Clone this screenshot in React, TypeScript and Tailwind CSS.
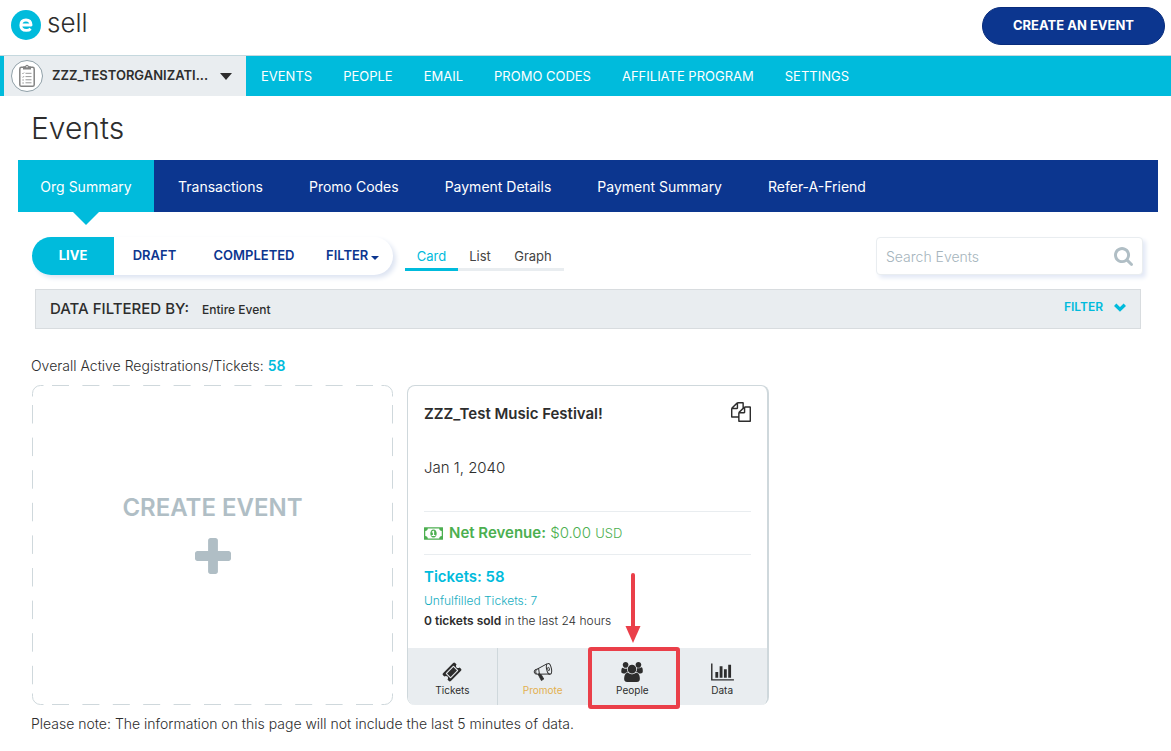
const PLUS = 'M1600 736v192q0 40-28 68t-68 28h-416v416q0 40-28 68t-68 28h-192q-40 0-68-28t-28-68v-416h-416q-40 0-68-28t-28-68v-192q0-40 28-68t68-28h416v-416q0-40 28-68t68-28h192q40 0 68 28t28 68v416h416q40 0 68 28t28 68z';
const SEARCH = 'M1216 832q0-185-131.5-316.5t-316.5-131.5-316.5 131.5-131.5 316.5 131.5 316.5 316.5 131.5 316.5-131.5 131.5-316.5zm512 832q0 52-38 90t-90 38q-54 0-90-38l-343-342q-179 124-399 124-143 0-273.5-55.5t-225-150-150-225-55.5-273.5 55.5-273.5 150-225 225-150 273.5-55.5 273.5 55.5 225 150 150 225 55.5 273.5q0 220-124 399l343 343q37 37 37 90z';
const COPY = 'M1696 384q40 0 68 28t28 68v1216q0 40-28 68t-68 28h-960q-40 0-68-28t-28-68v-288h-544q-40 0-68-28t-28-68v-672q0-40 20-88t48-76l408-408q28-28 76-48t88-20h416q40 0 68 28t28 68v328q68-40 128-40h416zm-544 213l-299 299h299v-299zm-640-384l-299 299h299v-299zm196 647l316-316v-416h-384v416q0 40-28 68t-68 28h-416v640h512v-256q0-40 20-88t48-76zm956 804v-1152h-384v416q0 40-28 68t-68 28h-416v640h896z';
const CHART = 'M640 896v512h-256v-512h256zm384-512v1024h-256v-1024h256zm1024 1152v128h-2048v-1536h128v1408h1920zm-640-896v768h-256v-768h256zm384-384v1152h-256v-1152h256z';
const USERS = 'M657 896q-162 5-265 128h-134q-82 0-138-40.5t-56-118.5q0-353 124-353 6 0 43.5 21t97.5 42.5 119 21.5q67 0 133-23-5 37-5 66 0 159 90 287zm1071 637q0 120-73 189.5t-194 69.5h-874q-121 0-194-69.5t-73-189.5q0-53 3.5-103.5t14-109 26.5-108.5 43-97.5 62-81 85.5-53.5 111.5-20q10 0 43 21.5t73 48 107 48 135 21.5 135-21.5 107-48 73-48 43-21.5q61 0 111.5 20t85.5 53.5 62 81 43 97.5 26.5 108.5 14 109 3.5 103.5zm-1024-1277q0 106-75 181t-181 75-181-75-75-181 75-181 181-75 181 75 75 181zm704 384q0 159-112.5 271.5t-271.5 112.5-271.5-112.5-112.5-271.5 112.5-271.5 271.5-112.5 271.5 112.5 112.5 271.5zm576 225q0 78-56 118.5t-138 40.5h-134q-103-123-265-128 90-128 90-287 0-29-5-66 66 23 133 23 59 0 119-21.5t97.5-42.5 43.5-21q124 0 124 353zm-128-609q0 106-75 181t-181 75-181-75-75-181 75-181 181-75 181 75 75 181z';
const MONEY = 'M768 1152h384v-96h-128v-448h-114l-148 137 77 80q42-37 55-57h2v288h-128v96zm512-256q0 70-21 142t-59.5 134-101.5 101-138 39-138-39-101.5-101-59.5-134-21-142 21-142 59.5-134 101.5-101 138-39 138 39 101.5 101 59.5 134 21 142zm512 256v-512q-106 0-181-75t-75-181h-1152q0 106-75 181t-181 75v512q106 0 181 75t75 181h1152q0-106 75-181t181-75zm128-832v1152q0 26-19 45t-45 19h-1792q-26 0-45-19t-19-45v-1152q0-26 19-45t45-19h1792q26 0 45 19t19 45z';
const TICKET = 'M1024 452l316 316-572 572-316-316zm-211 979l618-618q19-19 19-45t-19-45l-362-362q-18-18-45-18t-45 18l-618 618q-19 19-19 45t19 45l362 362q18 18 45 18t45-18zm889-637l-907 908q-37 37-90.5 37t-90.5-37l-126-126q56-56 56-136t-56-136-136-56-136 56l-125-126q-37-37-37-90.5t37-90.5l907-906q37-37 90.5-37t90.5 37l125 125q-56 56-56 136t56 136 136 56 136-56l126 125q37 37 37 90.5t-37 90.5z';

function Glyph({ d, box = '0 0 1792 1792', className }: { d: string; box?: string; className: string }) {
  return (
    <svg viewBox={box} className={className} fill="currentColor" aria-hidden="true">
      <path d={d} />
    </svg>
  );
}

function Clipboard() {
  return (
    <svg viewBox="0 0 32 32" className="size-8 shrink-0" fill="none" aria-hidden="true">
      <circle cx="16" cy="16" r="15.5" fill="#fff" stroke="#90a0a8" />
      <rect x="8.8" y="7.3" width="14.4" height="19" rx="1.6" stroke="#848484" strokeWidth="1.5" />
      <path d="M12 9.6V7.2q0-.9.9-.9h1.3q.2-1.6 1.8-1.6t1.8 1.6h1.3q.9 0 .9.9v2.4z" fill="#848484" />
      <circle cx="16" cy="6.8" r=".8" fill="#fff" />
      <path d="M11.3 13.2l.6.6 1.2-1.3M11.3 16.8l.6.6 1.2-1.3M11.3 20h1.6M11.3 23h1.6M14.5 13.3h6M14.5 16.6h6M14.5 19.8h6M14.5 22.8h6" stroke="#999" strokeWidth="1" />
    </svg>
  );
}

function Megaphone() {
  return (
    <svg viewBox="0 0 20 20" className="size-5" fill="none" stroke="#303030" aria-hidden="true">
      <path d="M4.4 7L14.2 1.7M5 12.2L17 12" strokeWidth="1" />
      <ellipse cx="16" cy="6.9" rx="2.4" ry="5.4" transform="rotate(-12 16 6.9)" strokeWidth="1" />
      <ellipse cx="15.6" cy="7" rx=".9" ry="1.8" transform="rotate(-12 15.6 7)" strokeWidth=".8" />
      <path d="M4.4 7Q1 7.4 1.1 10q.3 2.6 3.9 2.2l1.4-.1L5.6 6.4z" strokeWidth="1" />
      <path d="M3.2 7.6q-1 2.2 0 4.5" strokeWidth="1" />
      <path d="M5.2 12.4l2.8-.1 2.8 4.7-2.4 1.6z" fill="#303030" strokeWidth=".8" />
    </svg>
  );
}

function DashedFrame() {
  return (
    <svg viewBox="0 0 361 320" className="absolute inset-0 size-full" fill="none" stroke="#cfd8dc" aria-hidden="true">
      <path d="M20 .5H341M20 319.5H341" strokeDasharray="17 13.4" />
      <path d="M.5 20V300M360.5 20V300" strokeDasharray="18.5 14.1" />
      <path d="M.5 11.5V8.5a8 8 0 0 1 8-8h3M349.5 .5h3a8 8 0 0 1 8 8v3M360.5 308.5v3a8 8 0 0 1-8 8h-3M11.5 319.5h-3a8 8 0 0 1-8-8v-3" />
    </svg>
  );
}

const NAV = ['EVENTS', 'PEOPLE', 'EMAIL', 'PROMO CODES', 'AFFILIATE PROGRAM', 'SETTINGS'];
const TABS = ['Transactions', 'Promo Codes', 'Payment Details', 'Payment Summary', 'Refer-A-Friend'];

export default function App() {
  return (
    <div className="bg-white font-['Inter',sans-serif] text-[#2d2d2d]">
      <header className="flex h-[55px] items-start justify-between pl-[11px] pr-1.5">
        <a href="#" className="flex items-start gap-[6px] pt-2">
          <svg viewBox="0 0 30 30" className="mt-0.5 size-[30px]" fill="none" aria-hidden="true">
            <circle cx="15" cy="15" r="15" fill="#00bbdc" />
            <path d="M9.7 15h10.4q-.4-5-5.1-5-5.2 0-5.2 5.2 0 5.2 5.5 5.2 2.8 0 4.3-1.7" stroke="#fff" strokeWidth="2.8" strokeLinejoin="round" />
          </svg>
          <span className="text-[26px] font-light leading-[30px]">sell</span>
        </a>
        <button className="mt-[7px] h-[38px] rounded-full border border-[#082c7c] bg-[#0c368f] px-[30px] text-[13px] font-bold text-white">
          CREATE AN EVENT
        </button>
      </header>

      <nav className="flex h-[41px] border-t border-[#c5d8de] bg-[#00bbdc]">
        <button className="ml-1 flex w-[242px] items-center bg-[#e9edf0] pl-[7px] pr-3.5">
          <Clipboard />
          <span className="ml-[9px] whitespace-nowrap text-[13px] font-semibold">ZZZ_TESTORGANIZATI...</span>
          <svg viewBox="0 0 12 7" className="ml-auto h-[7px] w-3 shrink-0" fill="#2d2d2d" aria-hidden="true">
            <path d="M0 0h12L6 7z" />
          </svg>
        </button>
        <div className="flex items-center gap-[31px] pl-[15px] pt-px text-[13px] text-white">
          {NAV.map((item) => (
            <a key={item} href="#">{item}</a>
          ))}
        </div>
      </nav>

      <main className="pb-4 pl-[18px] pr-[13px]">
        <h1 className="flex h-16 items-center pl-[13px] text-[30px] font-light">Events</h1>

        <nav className="flex h-[52px] bg-[#0c368f] text-[14px] text-white">
          <a href="#" className="relative mr-px flex w-[136px] items-center justify-center bg-[#00bbdc]">
            Org Summary
            <svg viewBox="0 0 26 13" className="absolute left-[55px] top-full h-[13px] w-[26px]" fill="#00bbdc" aria-hidden="true">
              <path d="M0 0h26L13 13z" />
            </svg>
          </a>
          {TABS.map((tab) => (
            <a key={tab} href="#" className="flex items-center px-[23px]">{tab}</a>
          ))}
        </nav>

        <div className="mt-[25px] flex items-start pl-[14px] pr-[15px]">
          <div className="flex h-[38px] w-[361px] overflow-hidden rounded-full text-[13px] font-semibold text-[#0c368f] shadow-[3px_3px_5px_#dde4f2]">
            <button className="w-[82px] bg-[#00bbdc] font-bold text-white">LIVE</button>
            <button className="w-[81px]">DRAFT</button>
            <button className="w-[118px]">COMPLETED</button>
            <button className="flex flex-1 items-center gap-[3px] pl-[13px]">
              FILTER
              <svg viewBox="0 0 8 4" className="mt-1 h-1 w-2" fill="currentColor" aria-hidden="true">
                <path d="M0 0h8L4 4z" />
              </svg>
            </button>
          </div>
          <div className="ml-3 flex h-[34px] text-[13px] text-[#444]">
            <button className="w-[53px] border-b-[3px] border-[#00bbdc] pt-2 text-[#00bbdc]">Card</button>
            <button className="w-11 border-b-[3px] border-[#e9edf0] pt-2">List</button>
            <button className="w-[62px] border-b-[3px] border-[#e9edf0] pt-2">Graph</button>
          </div>
          <div className="ml-auto flex h-[38px] w-[267px] items-center rounded border border-[#e9edf0] bg-white px-[9px] shadow-[3px_3px_4px_#e3e9f6]">
            <input type="text" aria-label="Search Events" placeholder="Search Events" className="min-w-0 flex-1 text-[14px] font-light outline-none placeholder:text-[#a5b4bc]" />
            <button aria-label="Search" className="text-[#b0bec5]">
              <Glyph d={SEARCH} box="64 128 1664 1664" className="size-[19px]" />
            </button>
          </div>
        </div>

        <section className="mx-[17px] mt-[14px] flex h-10 items-center border border-[#d8dcdf] bg-[#e9edf0] px-[14px]">
          <h2 className="text-[15px] font-medium">DATA FILTERED BY:</h2>
          <span className="ml-[13px] pt-px text-[12px] font-medium">Entire Event</span>
          <button className="mb-1 ml-auto flex items-center gap-[11px] text-[12px] font-semibold text-[#00bbdc]">
            FILTER
            <svg viewBox="0 0 12 9" className="h-[9px] w-3" fill="none" stroke="currentColor" strokeWidth="3.4" aria-hidden="true">
              <path d="M1.2 1.8L6 6.4l4.8-4.6" />
            </svg>
          </button>
        </section>

        <div className="pl-[13px]">
          <p className="mt-[27px] text-[14px] font-light leading-5">
            Overall Active Registrations/Tickets: <b className="font-semibold text-[#00bbdc]">58</b>
          </p>

          <div className="mt-[9px] flex gap-[14px] pl-px">
            <button className="relative flex h-80 w-[361px] flex-col items-center justify-center pb-[26px] text-[#b0bec5]">
              <DashedFrame />
              <span className="text-[24px] font-semibold leading-9">CREATE EVENT</span>
              <Glyph d={PLUS} box="192 128 1408 1408" className="mt-3 size-9" />
            </button>

            <article className="flex h-80 w-[362px] flex-col overflow-hidden rounded-lg border border-b-0 border-r-2 border-[#cfd8dc]">
              <div className="px-4 pt-4">
                <div className="flex h-6 items-center justify-between">
                  <h3 className="text-[15px] font-semibold">ZZZ_Test Music Festival!</h3>
                  <button aria-label="Duplicate event">
                    <Glyph d={COPY} className="mb-1 size-5" />
                  </button>
                </div>
                <p className="mt-[30px] text-[15px] font-light leading-6">Jan 1, 2040</p>
                <div className="mt-[31px] flex h-11 items-center border-y border-[#e9edf0] text-[15px] text-[#4caf50]">
                  <Glyph d={MONEY} box="0 256 1920 1280" className="mr-1.5 h-[13px] w-[19px]" />
                  <p><b className="font-semibold">Net Revenue:</b> <span className="font-light">$0.00 <span className="text-[13px]">USD</span></span></p>
                </div>
                <p className="mt-2.5 text-[15px] font-semibold leading-6 text-[#00bbdc]">Tickets: 58</p>
                <p className="mt-0.5 text-[12px] font-light leading-5 text-[#17aebf]">Unfulfilled Tickets: 7</p>
                <p className="text-[12px] font-light leading-5"><b className="font-semibold">0 tickets sold</b> in the last 24 hours</p>
              </div>
              <div className="mt-auto grid h-[57px] shrink-0 grid-cols-4 bg-[#e9edf0] text-[10px]">
                <a href="#" className="flex flex-col items-center gap-px border-r border-[#cfd8dc] pt-3.5">
                  <Glyph d={TICKET} box="0 0 1792 1792" className="size-5" />
                  <span>Tickets</span>
                </a>
                <a href="#" className="flex flex-col items-center gap-px pt-3.5">
                  <Megaphone />
                  <span className="text-[#e3b04f]">Promote</span>
                </a>
                <a href="#" className="flex flex-col items-center gap-px pt-3.5">
                  <Glyph d={USERS} box="64 0 1920 1792" className="h-5 w-[22px]" />
                  <span>People</span>
                </a>
                <a href="#" className="flex flex-col items-center gap-px pt-3.5">
                  <Glyph d={CHART} box="0 0 2048 1792" className="h-5 w-[23px]" />
                  <span>Data</span>
                </a>
              </div>
            </article>
            <div className="relative">
              <svg viewBox="0 0 92 136" className="absolute -left-[195px] top-[188px] h-[136px] w-[92px] max-w-none" fill="none" aria-hidden="true">
                <path d="M45 2v54" stroke="#ea3f49" strokeWidth="4" strokeLinecap="round" />
                <path d="M37.5 53h15L45 70z" fill="#ea3f49" />
                <rect x="2" y="76" width="88" height="58" stroke="#ea3f49" strokeWidth="4" rx="1" />
              </svg>
            </div>
          </div>

          <p className="mt-[9px] text-[14px] font-light leading-5">Please note: The information on this page will not include the last 5 minutes of data.</p>
        </div>
      </main>
    </div>
  );
}
